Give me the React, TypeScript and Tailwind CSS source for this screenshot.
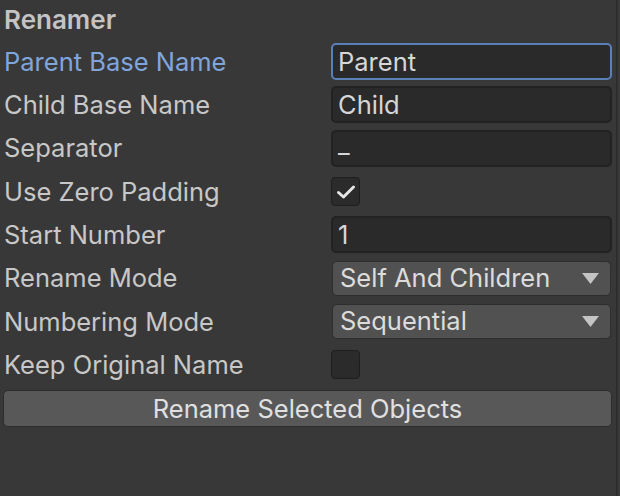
import React from "react";

const font = { fontFamily: "Inter, 'Liberation Sans', sans-serif" };

function Row({ label, active, children }: { label: string; active?: boolean; children: React.ReactNode }) {
  return (
    <div className="flex h-[43.3px] items-center">
      <div className={`w-[331px] shrink-0 pl-[4px] text-[25.5px] leading-none ${active ? "text-[#7fa6dc]" : "text-[#c8c8c8]"}`}>{label}</div>
      <div className="flex flex-1 items-center pr-[4px]">{children}</div>
    </div>
  );
}

function TextField({ value, focused, low }: { value: string; focused?: boolean; low?: boolean }) {
  return (
    <div
      className={`flex h-[37px] w-full items-center rounded-[5px] border-2 bg-[#2a2a2a] px-[5px] text-[25.5px] text-[#d6d6d6] ${
        focused ? "border-[#5a80b8]" : "border-[#222222]"
      } ${low ? "items-end pb-[1px]" : ""}`}
    >
      {value}
    </div>
  );
}

function Dropdown({ value }: { value: string }) {
  return (
    <div className="mx-[1px] flex h-[35px] w-full items-center justify-between rounded-[5px] border border-[#2e2e2e] bg-[#515151] pl-[7px] pr-[11px] text-[25.5px] text-[#dcdcdc]">
      <span>{value}</span>
      <svg width="17" height="11" viewBox="0 0 17 11">
        <path d="M0 0 H17 L8.5 11 Z" fill="#c4c4c4" />
      </svg>
    </div>
  );
}

function Checkbox({ checked }: { checked?: boolean }) {
  return (
    <div className="flex h-[29px] w-[29px] items-center justify-center rounded-[4px] border border-[#1e1e1e] bg-[#2b2b2b]">
      {checked && (
        <svg width="20" height="16" viewBox="0 0 20 16">
          <path d="M2.5 8.5 L7.5 13 L17.5 3" fill="none" stroke="#e6e6e6" strokeWidth="3" strokeLinecap="round" strokeLinejoin="round" />
        </svg>
      )}
    </div>
  );
}

export default function App() {
  return (
    <div className="flex h-[496px] w-[620px] bg-[#383838]" style={font}>
      <div className="flex flex-1 flex-col">
        <div className="flex h-[40px] items-center pl-[4px] text-[26px] font-semibold leading-none text-[#c4c4c4]">Renamer</div>
        <Row label="Parent Base Name" active>
          <TextField value="Parent" focused />
        </Row>
        <Row label="Child Base Name">
          <TextField value="Child" />
        </Row>
        <Row label="Separator">
          <TextField value="_" low />
        </Row>
        <Row label="Use Zero Padding">
          <Checkbox checked />
        </Row>
        <Row label="Start Number">
          <TextField value="1" />
        </Row>
        <Row label="Rename Mode">
          <Dropdown value="Self And Children" />
        </Row>
        <Row label="Numbering Mode">
          <Dropdown value="Sequential" />
        </Row>
        <Row label="Keep Original Name">
          <Checkbox />
        </Row>
        <div className="mt-[4px] pl-[3px] pr-[4px]">
          <div className="flex h-[37px] items-center justify-center rounded-[5px] border border-[#2c2c2c] bg-[#585858] text-[25.5px] text-[#e0e0e0]">
            Rename Selected Objects
          </div>
        </div>
      </div>
      <div className="w-[2px] bg-[#2e2e2e]" />
      <div className="w-[2px] bg-[#3a3a3a]" />
    </div>
  );
}
